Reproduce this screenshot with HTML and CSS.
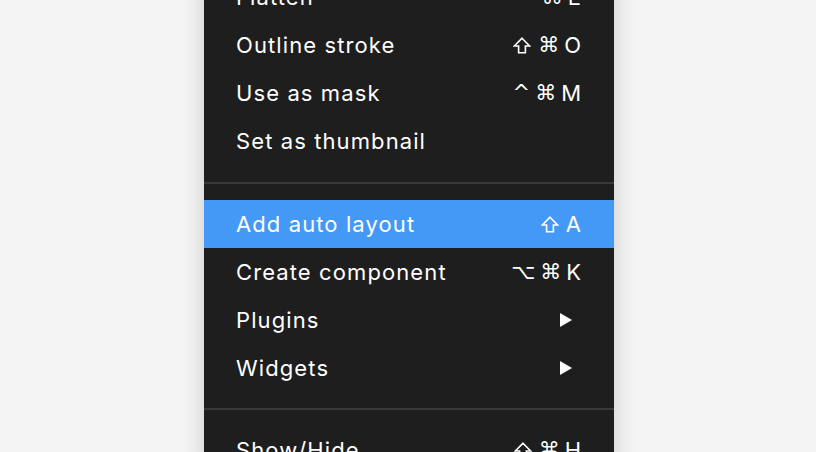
FILE: index.html
```html
<!DOCTYPE html>
<html>
<head>
<meta charset="utf-8">
<link rel="stylesheet" href="styles.css">
</head>
<body>
<div class="menu">
  <div class="item"><span class="label">Flatten</span><span class="keys"><span class="sym">⌘</span><span>E</span></span></div>
  <div class="item"><span class="label">Outline stroke</span><span class="keys"><svg class="shift" viewBox="0 0 18 17"><path d="M9 1.2 L16.6 9 H12.4 V15.8 H5.6 V9 H1.4 Z" fill="none" stroke="#fff" stroke-width="1.6" stroke-linejoin="miter"/></svg><span class="sym">⌘</span><span>O</span></span></div>
  <div class="item"><span class="label">Use as mask</span><span class="keys"><span class="sym caret">^</span><span class="sym">⌘</span><span>M</span></span></div>
  <div class="item"><span class="label">Set as thumbnail</span></div>
  <div class="sep first"></div>
  <div class="item active"><span class="label">Add auto layout</span><span class="keys"><svg class="shift" viewBox="0 0 18 17"><path d="M9 1.2 L16.6 9 H12.4 V15.8 H5.6 V9 H1.4 Z" fill="none" stroke="#fff" stroke-width="1.6" stroke-linejoin="miter"/></svg><span>A</span></span></div>
  <div class="item"><span class="label">Create component</span><span class="keys"><span class="sym">⌥</span><span class="sym">⌘</span><span>K</span></span></div>
  <div class="item"><span class="label">Plugins</span><span class="arrow"></span></div>
  <div class="item"><span class="label">Widgets</span><span class="arrow"></span></div>
  <div class="sep"></div>
  <div class="item"><span class="label">Show/Hide</span><span class="keys"><svg class="shift" viewBox="0 0 18 17"><path d="M9 1.2 L16.6 9 H12.4 V15.8 H5.6 V9 H1.4 Z" fill="none" stroke="#fff" stroke-width="1.6" stroke-linejoin="miter"/></svg><span class="sym">⌘</span><span>H</span></span></div>
</div>
</body>
</html>
```
FILE: styles.css
```css
html, body {
  margin: 0;
  padding: 0;
  background: #f4f4f4;
  overflow: hidden;
  height: 452px;
}
.menu {
  width: 410px;
  margin-left: 204px;
  margin-top: -27px;
  background: #1e1e1e;
  box-shadow: 0 0 22px rgba(0, 0, 0, 0.16);
  font-family: Inter, "Noto Sans", sans-serif;
  font-size: 22px;
  letter-spacing: 1.1px;
  color: #ffffff;
}
.item {
  height: 48px;
  display: flex;
  align-items: center;
  justify-content: space-between;
  padding: 0 33px 0 32px;
}
.item.active {
  background: #4599f6;
}
.keys {
  display: flex;
  gap: 5px;
  align-items: center;
  letter-spacing: 0;
}
.shift {
  width: 18px;
  height: 17px;
  margin-right: 2px;
}
.sym {
  font-family: "DejaVu Sans", sans-serif;
  font-size: 21px;
}
.arrow {
  width: 0;
  height: 0;
  border-top: 7.5px solid transparent;
  border-bottom: 7.5px solid transparent;
  border-left: 12px solid #ffffff;
  margin-right: 9px;
}
.sep {
  height: 2px;
  background: #383838;
  margin: 16px 0;
}
.sep.first {
  margin-top: 17px;
}
```
